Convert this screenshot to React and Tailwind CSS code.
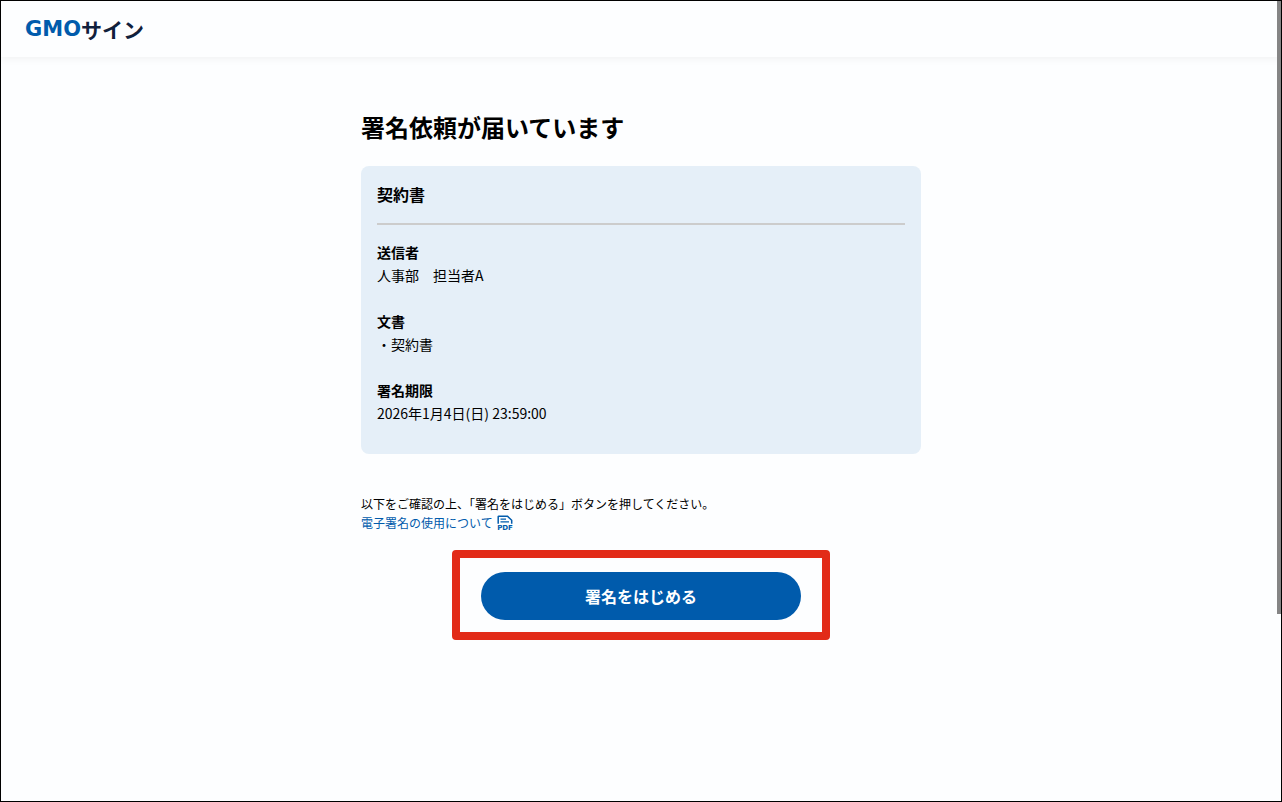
const details = [
    { label: '送信者', value: '人事部　担当者A' },
    { label: '文書', value: '・契約書' },
    { label: '署名期限', value: '2026年1月4日(日) 23:59:00' },
];

const Logo = () => (
    <a
        href="#top"
        aria-label="GMOサイン"
        className="flex items-center text-[21px] leading-6 font-bold"
    >
        <span className="font-['DejaVu_Sans',sans-serif] text-[#005bac]">GMO</span>
        <span className="text-[#10203c]">サイン</span>
    </a>
);

const PdfIcon = () => (
    <svg
        className="w-4 h-4"
        viewBox="0 0 16 16"
        fill="none"
        stroke="currentColor"
        strokeWidth="1.5"
        aria-hidden="true"
    >
        {/* Page with cut corner */}
        <path d="M1.2 8.8V1.8a.6.6 0 0 1 .6-.6h8.7l4.2 4.1v3.5" />
        <path d="M3.5 4.2h5.5M3.5 6.9h8.5" strokeWidth="1.2" />
        <text
            x="8"
            y="15.2"
            textAnchor="middle"
            fill="currentColor"
            fontSize="7"
            fontWeight="700"
            fontFamily="DejaVu Sans, sans-serif"
            stroke="none"
        >
            PDF
        </text>
    </svg>
);

const Header = () => (
    <header className="flex items-center h-14 px-6 bg-[#fdfeff] shadow-[0_2px_8px_rgba(0,0,0,0.05)]">
        <Logo />
    </header>
);

const RequestCard = () => (
    <section className="rounded-lg bg-[#e5eff8] px-4 pt-[15px] pb-[29px]">
        <h2 className="pb-4 border-b-2 border-[#cccccc] text-base leading-[26px] font-bold">
            契約書
        </h2>
        <dl className="flex flex-col gap-[23px] mt-4 text-sm leading-[23px]">
            {details.map(({ label, value }) => (
                <div key={label}>
                    <dt className="font-bold">{label}</dt>
                    <dd>{value}</dd>
                </div>
            ))}
        </dl>
    </section>
);

const App = () => {
    return (
        <div
            id="top"
            className="relative min-h-screen border border-black bg-[#fdfeff] text-black font-['Noto_Sans_CJK_JP',sans-serif]"
        >
            <Header />

            <main className="w-full max-w-[560px] mx-auto pt-[52px]">
                <h1 className="mb-[21px] text-2xl leading-9 font-bold">署名依頼が届いています</h1>

                <RequestCard />

                <div className="mt-10 text-xs leading-[19px]">
                    <p>以下をご確認の上、「署名をはじめる」ボタンを押してください。</p>
                    <a href="#pdf" className="inline-flex items-center gap-1 text-[#005bac]">
                        電子署名の使用について
                        <PdfIcon />
                    </a>
                </div>

                {/* Highlighted call to action */}
                <div className="w-fit mx-auto mt-[18px] px-[21px] pt-[14px] pb-3 border-8 border-[#e22b18] rounded-[4px]">
                    <button
                        type="button"
                        className="block w-80 h-12 rounded-full bg-[#005bac] hover:bg-[#004c90] text-white text-base font-bold"
                    >
                        署名をはじめる
                    </button>
                </div>
            </main>

            {/* Scroll thumb */}
            <div className="absolute top-0 right-0 w-1 h-[613px] bg-[#858585]" />
        </div>
    );
};

export default App;
